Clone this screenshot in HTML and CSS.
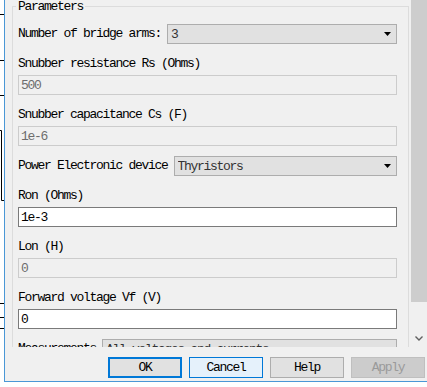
FILE: index.html
```html
<!DOCTYPE html>
<html>
<head>
<meta charset="utf-8">
<link rel="stylesheet" href="styles.css">
</head>
<body>
<svg class="wires" width="4" height="387" viewBox="0 0 4 387">
  <path d="M0 14.5H4M0 60.5H4M0 95.5H4M0 130.5H1.5V200.5H4M0 303.5H4M0 317.5H4M0 328.5H4" stroke="#000" stroke-width="1" fill="none"/>
</svg>
<div class="dialog">
  <div class="panel">
    <div class="scroll">
      <fieldset class="group">
        <legend>Parameters</legend>
        <div class="row">
          <span class="lbl">Number of bridge arms:</span>
          <div class="select"><span class="val">3</span><svg class="arrow" width="7" height="4" viewBox="0 0 7 4"><path d="M0 0H7L3.5 4Z" fill="#000"/></svg></div>
        </div>
        <div class="field">
          <div class="flabel">Snubber resistance Rs (Ohms)</div>
          <div class="input disabled">500</div>
        </div>
        <div class="field">
          <div class="flabel">Snubber capacitance Cs (F)</div>
          <div class="input disabled">1e-6</div>
        </div>
        <div class="row">
          <span class="lbl">Power Electronic device</span>
          <div class="select"><span class="val">Thyristors</span><svg class="arrow" width="7" height="4" viewBox="0 0 7 4"><path d="M0 0H7L3.5 4Z" fill="#000"/></svg></div>
        </div>
        <div class="field">
          <div class="flabel">Ron (Ohms)</div>
          <div class="input">1e-3</div>
        </div>
        <div class="field">
          <div class="flabel">Lon (H)</div>
          <div class="input disabled">0</div>
        </div>
        <div class="field">
          <div class="flabel">Forward voltage Vf (V)</div>
          <div class="input">0</div>
        </div>
        <div class="row">
          <span class="lbl">Measurements</span>
          <div class="select"><span class="val">All voltages and currents</span><svg class="arrow" width="7" height="4" viewBox="0 0 7 4"><path d="M0 0H7L3.5 4Z" fill="#000"/></svg></div>
        </div>
      </fieldset>
    </div>
    <div class="scrollbar">
      <div class="thumb"></div>
      <div class="track">
        <svg class="chev" width="8" height="5" viewBox="0 0 8 5"><path d="M0.5 0.5L4 4L7.5 0.5" stroke="#606060" stroke-width="1.4" fill="none"/></svg>
      </div>
    </div>
  </div>
  <div class="buttons">
    <button class="btn ok">OK</button>
    <button class="btn cancel">Cancel</button>
    <button class="btn">Help</button>
    <button class="btn apply">Apply</button>
  </div>
</div>
</body>
</html>
```
FILE: styles.css
```css
html, body {
  margin: 0;
  padding: 0;
  background: #ffffff;
  width: 427px;
  height: 387px;
  overflow: hidden;
}

body {
  position: relative;
  font-family: "Liberation Mono", "DejaVu Sans Mono", monospace;
  font-size: 13px;
  letter-spacing: -1.3px;
  color: #000;
}

.wires {
  position: absolute;
  left: 0;
  top: 0;
}

.dialog {
  margin-left: 4px;
  width: 423px;
  height: 382px;
  box-sizing: border-box;
  border-left: 1px solid #4a97d6;
  border-bottom: 1px solid #4a97d6;
  background: #f0f0f0;
  display: flex;
  flex-direction: column;
}

.panel {
  height: 347px;
  display: flex;
  overflow: hidden;
}

.scroll {
  padding-left: 7px;
}

.group {
  margin: 0;
  width: 397px;
  box-sizing: border-box;
  border: 1px solid #dcdcdc;
  padding: 11px 11px 20px 5px;
  display: flex;
  flex-direction: column;
  gap: 10px;
}

.group legend {
  margin-left: -2px;
  padding: 0 2px;
  line-height: 13px;
  height: 13px;
}

.row {
  display: flex;
  align-items: center;
  height: 20px;
}

.lbl {
  white-space: nowrap;
  margin-right: 6px;
  line-height: 20px;
}

.select {
  flex: 1;
  height: 20px;
  box-sizing: border-box;
  border: 1px solid #adadad;
  background: #e1e1e1;
  display: flex;
  align-items: center;
  padding-left: 3px;
  padding-right: 5px;
}

.select .val {
  flex: 1;
  line-height: 18px;
  padding-top: 1px;
  white-space: nowrap;
  overflow: hidden;
  color: #333;
}

.arrow {
  flex: none;
}

.field {
  display: flex;
  flex-direction: column;
}

.flabel {
  line-height: 19px;
  height: 21px;
  white-space: nowrap;
}

.input {
  height: 20px;
  box-sizing: border-box;
  border: 1px solid #7a7a7a;
  background: #ffffff;
  padding: 1px 2px 0 2px;
  line-height: 17px;
  white-space: nowrap;
}

.input.disabled {
  border-color: #cccccc;
  background: #f0f0f0;
  color: #6d6d6d;
}

.scrollbar {
  flex: 1;
  display: flex;
  flex-direction: column;
  padding-left: 2px;
}

.thumb {
  height: 302px;
  background: #cdcdcd;
}

.track {
  flex: 1;
  display: flex;
  align-items: flex-end;
  justify-content: center;
  padding-bottom: 6px;
  padding-right: 1px;
}

.chev {
  display: block;
}

.buttons {
  flex: 1;
  display: flex;
  justify-content: flex-end;
  align-items: flex-start;
  gap: 7px;
  padding-top: 10px;
  padding-right: 2px;
}

.btn {
  width: 74px;
  height: 21px;
  box-sizing: border-box;
  margin: 0;
  padding: 0;
  border: 1px solid #adadad;
  background: #e1e1e1;
  font: inherit;
  letter-spacing: inherit;
  color: #000;
  line-height: 19px;
}

.btn.ok {
  border: 2px solid #0078d7;
  line-height: 17px;
}

.btn.cancel {
  border-color: #0078d7;
  background: #e5f1fb;
}

.btn.apply {
  border-color: #bfbfbf;
  background: #cccccc;
  color: #9a9a9a;
}
```
